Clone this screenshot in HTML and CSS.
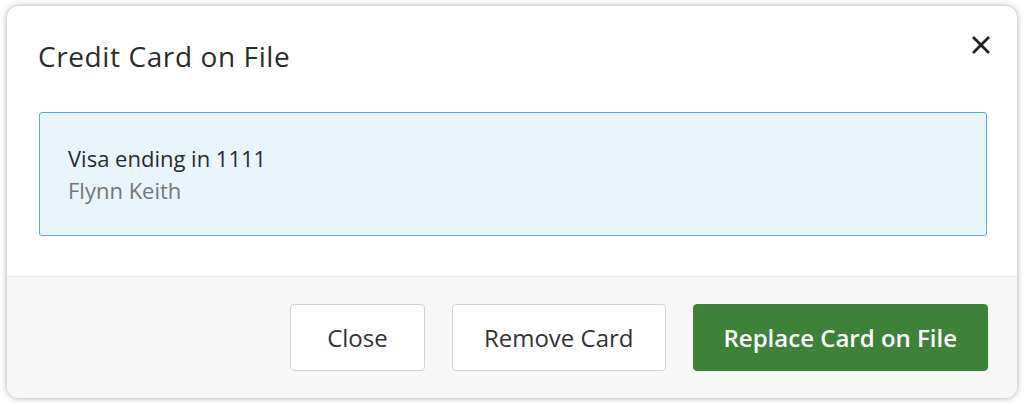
FILE: index.html
```html
<!DOCTYPE html>
<html lang="en">
  <head>
    <meta charset="UTF-8" />
    <title>Credit Card on File</title>
    <link rel="stylesheet" href="styles.css">
  </head>
  <body>
    <div class="modal">
      <div class="modal-header">
        <h2>Credit Card on File</h2>
        <button class="close-x" aria-label="Close">
          <svg viewBox="0 0 18 18" width="18" height="18">
            <path d="M2 2 L16 16 M16 2 L2 16" stroke="#222" stroke-width="2.8" stroke-linecap="square" />
          </svg>
        </button>
      </div>
      <div class="modal-body">
        <div class="card-info">
          <div class="card-name">Visa ending in 1111</div>
          <div class="card-holder">Flynn Keith</div>
        </div>
      </div>
      <div class="modal-footer">
        <button class="btn btn-close">Close</button>
        <button class="btn">Remove Card</button>
        <button class="btn btn-green">Replace Card on File</button>
      </div>
    </div>
  </body>
</html>
```

FILE: styles.css
```css
body {
  margin: 0;
  padding: 6px 8px 7px 7px;
  background: #fff;
  font-family: "Open Sans", Arial, sans-serif;
  color: #2b2b2b;
}
.modal {
  background: #fff;
  border-radius: 12px;
  box-shadow: 0 0 6px rgba(0, 0, 0, 0.35);
  overflow: hidden;
  height: 392px;
  display: flex;
  flex-direction: column;
}
.modal-header {
  display: flex;
  justify-content: space-between;
  align-items: flex-start;
  padding: 0 27px 0 31px;
  height: 106px;
}
.modal-header h2 {
  margin: 31px 0 0;
  font-size: 28px;
  font-weight: 400;
  letter-spacing: 0.6px;
}
.close-x {
  border: 0;
  background: none;
  padding: 0;
  margin-top: 30px;
  cursor: pointer;
}
.modal-body {
  padding: 0 30px 0 32px;
  height: 164px;
}
.card-info {
  background: #eaf4fb;
  border: 1px solid #5aa6e0;
  border-radius: 3px;
  height: 124px;
  box-sizing: border-box;
  padding: 29px 28px;
  font-size: 22px;
  line-height: 32px;
}
.card-holder {
  color: #777;
}
.modal-footer {
  flex: 1;
  background: #f7f7f7;
  border-top: 1px solid #e6e6e6;
  display: flex;
  justify-content: flex-end;
  align-items: flex-start;
  gap: 27px;
  padding: 27px 29px 0 0;
}
.btn {
  font-family: inherit;
  font-size: 24px;
  color: #333;
  background: #fff;
  border: 1px solid #d3d3d3;
  border-radius: 4px;
  height: 67px;
  padding: 0 31px;
  cursor: pointer;
}
.btn-close {
  width: 135px;
}
.btn-green {
  background: #3d8238;
  border-color: #3d8238;
  color: #fff;
  font-weight: 600;
  padding: 0 30px;
}
```
